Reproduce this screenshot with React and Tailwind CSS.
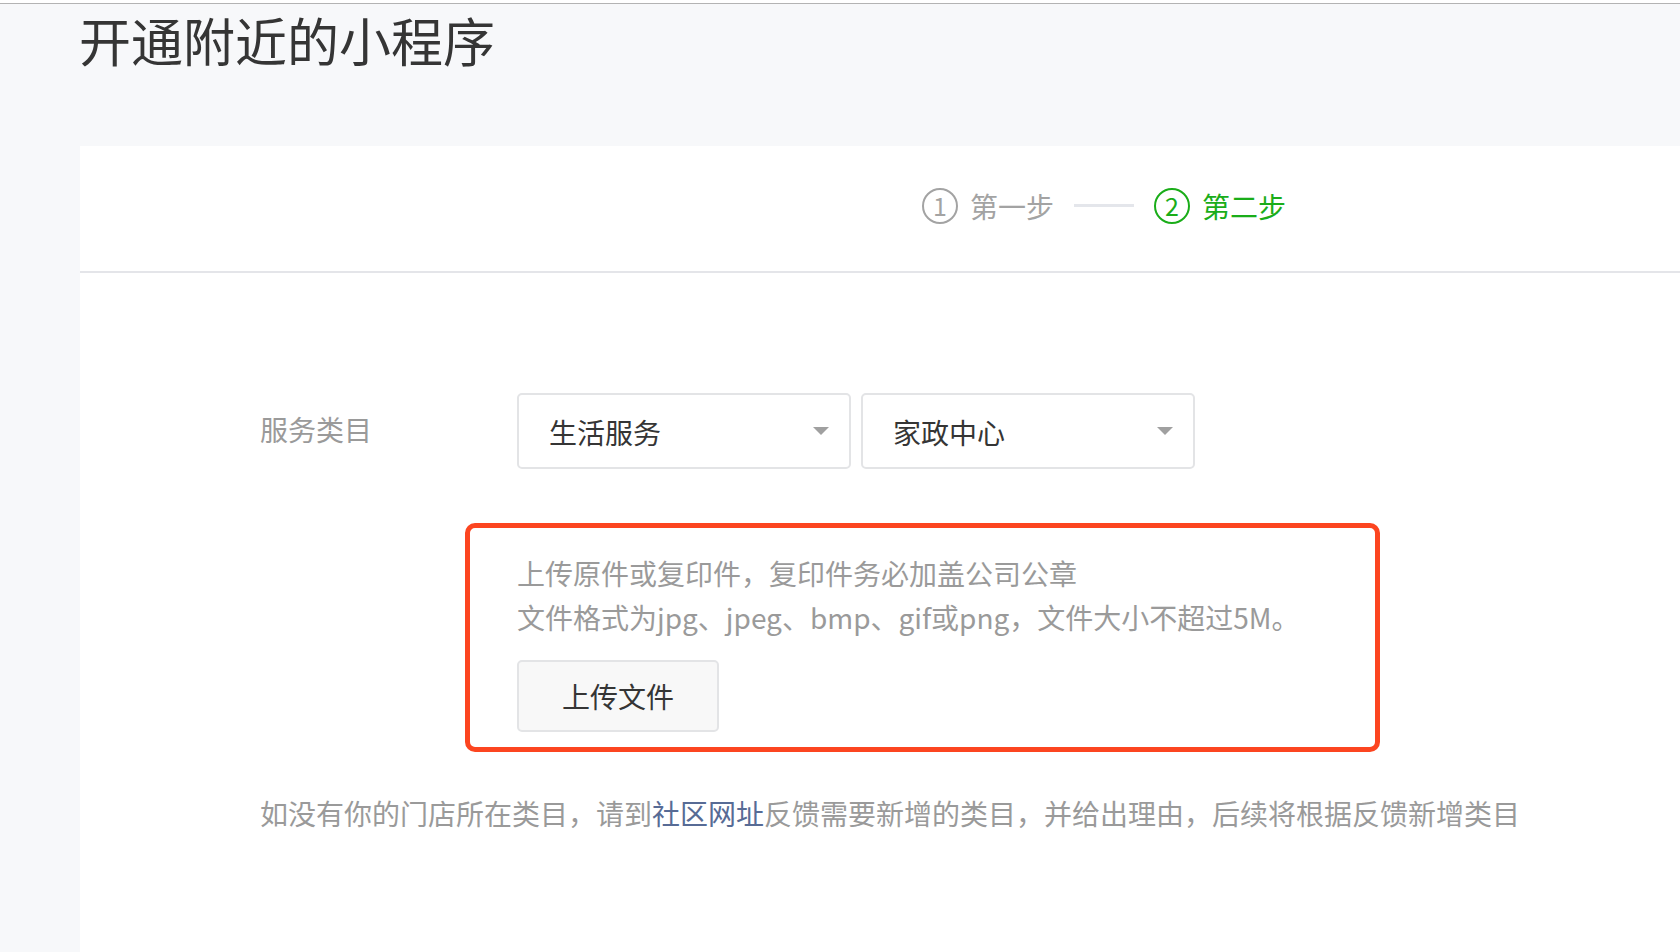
import React from "react";

const font = { fontFamily: '"Noto Sans CJK SC", "Noto Sans", sans-serif' };

function Arrow() {
  return (
    <svg width="16" height="8" viewBox="0 0 16 8" className="shrink-0">
      <path d="M0 0 L16 0 L8 8 Z" fill="#a0a0a0" />
    </svg>
  );
}

function Select({ value }) {
  return (
    <div className="w-[334px] h-[76px] border-2 border-[#e3e4e6] rounded-[5px] bg-white flex items-center justify-between pl-[30px] pr-[20px]">
      <span className="text-[28px] leading-none text-[#353535] mt-[2px]">{value}</span>
      <Arrow />
    </div>
  );
}

function Step({ num, label, active }) {
  const color = active ? "text-[#1aad19] border-[#1aad19]" : "text-[#a3a3a3] border-[#a3a3a3]";
  return (
    <div className={`flex items-center ${active ? "text-[#1aad19]" : "text-[#a3a3a3]"}`}>
      <div className={`w-[36px] h-[36px] rounded-full border-2 flex items-center justify-center text-[25px] leading-none ${color}`}>
        {num}
      </div>
      <span className="ml-[12px] text-[28px] leading-none">{label}</span>
    </div>
  );
}

export default function App() {
  return (
    <div className="w-[1680px] h-[952px] overflow-hidden bg-[#f7f8fa]" style={font}>
      <div className="h-[3px] bg-white" />
      <div className="h-px bg-[#b3b3b3]" />
      <h1 className="pl-[79px] pt-[6px] text-[52px] leading-[60px] text-[#353535] font-normal">
        开通附近的小程序
      </h1>

      <div className="ml-[80px] mt-[76px] bg-white h-[900px]">
        <div className="h-[127px] border-b-2 border-[#e4e5e9] flex items-center pl-[842px] pb-[6px]">
          <Step num="1" label="第一步" />
          <div className="ml-[20px] mr-[20px] w-[60px] h-[3px] bg-[#e4e6eb]" />
          <Step num="2" label="第二步" active />
        </div>

        <div className="pl-[180px] pt-[120px]">
          <div className="flex items-center">
            <div className="w-[257px] text-[28px] leading-none text-[#9a9a9a] -mt-[4px]">服务类目</div>
            <div className="flex gap-[10px]">
              <Select value="生活服务" />
              <Select value="家政中心" />
            </div>
          </div>

          <div className="ml-[205px] mt-[54px] w-[915px] border-[5px] border-[#fc4520] rounded-[10px] pl-[47px] pt-[23px] pb-[15px]">
            <p className="text-[28px] leading-[44px] text-[#9a9a9a]">上传原件或复印件，复印件务必加盖公司公章</p>
            <p className="text-[28px] leading-[44px] text-[#9a9a9a]">
              文件格式为jpg、jpeg、bmp、gif或png，文件大小不超过5M。
            </p>
            <button className="mt-[21px] w-[202px] h-[72px] bg-[#f8f8f8] border-2 border-[#e3e4e6] rounded-[5px] text-[28px] leading-none text-[#353535]">
              上传文件
            </button>
          </div>

          <p className="mt-[41px] text-[28px] leading-[40px] text-[#9a9a9a]">
            如没有你的门店所在类目，请到<span className="text-[#576b95]">社区网址</span>反馈需要新增的类目，并给出理由，后续将根据反馈新增类目
          </p>
        </div>
      </div>
    </div>
  );
}
